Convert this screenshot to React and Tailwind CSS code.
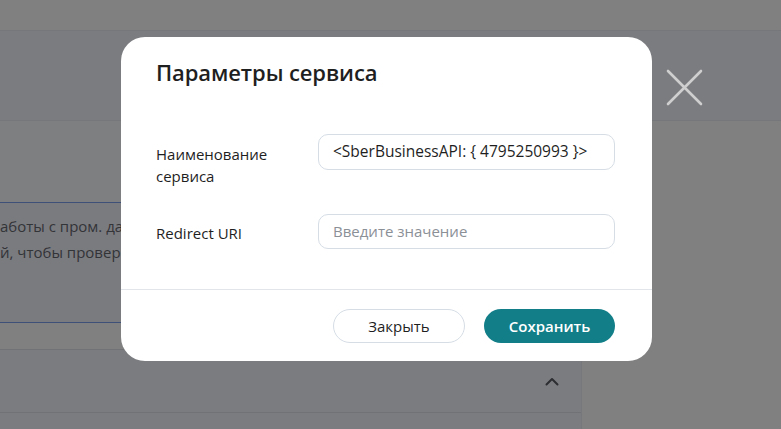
import React from "react";

export default function App() {
  const font = { fontFamily: '"Open Sans", "Noto Sans", sans-serif' };
  return (
    <div className="relative w-[781px] h-[429px] overflow-hidden bg-[#808080]" style={font}>
      {/* background page (under overlay) */}
      <div className="flex flex-col h-full">
        <div className="h-[31px] bg-[#808080] border-b border-[#76777a] shrink-0" />
        <div className="h-[90px] bg-[#7b7c80] border-b border-[#76777a] shrink-0" />
        <div className="flex flex-1">
          <div className="w-[582px] flex flex-col border-r border-[#77787b] bg-[#7e7f81]">
            <div className="h-[81px] shrink-0" />
            <div className="h-[121px] shrink-0 bg-[#7a7b7f] border-y border-[#3e5078] pt-[10px]">
              <div className="text-[15px] leading-[26px] text-[#333438] whitespace-nowrap">
                <p>аботы с пром. да</p>
                <p>й, чтобы провер</p>
              </div>
            </div>
            <div className="h-[27px] shrink-0 bg-[#808080] border-b border-[#717276]" />
            <div className="h-[63px] shrink-0 bg-[#7b7c80] border-b border-[#717276] flex items-center justify-end pr-[22px]">
              <svg width="14" height="9" viewBox="0 0 14 9">
                <path d="M1.5 7.5 L7 2 L12.5 7.5" fill="none" stroke="#2d2e31" strokeWidth="2" strokeLinecap="round" strokeLinejoin="round" />
              </svg>
            </div>
            <div className="flex-1 bg-[#7b7c80]" />
          </div>
          <div className="flex-1 bg-[#808080]" />
        </div>
      </div>

      {/* close icon over overlay */}
      <svg className="absolute left-[664px] top-[67px]" width="41" height="41" viewBox="0 0 41 41">
        <path d="M4 4 L37 37 M37 4 L4 37" stroke="#cfcfcf" strokeWidth="2.6" strokeLinecap="round" />
      </svg>

      {/* modal */}
      <div className="absolute left-[121px] top-[37px] w-[531px] h-[324px] bg-white rounded-[24px] flex flex-col">
        <div className="pl-[35px] pt-[21px] h-[97px] shrink-0">
          <h2 className="text-[22px] leading-[28px] font-semibold text-[#1f1f1f] tracking-[-0.1px]">Параметры сервиса</h2>
        </div>
        <div className="flex flex-col gap-[44px] pl-[35px] pr-[37px]">
          <div className="flex items-start h-[36px]">
            <div className="w-[162px] pt-[9px] text-[15px] leading-[22px] text-[#1f1f1f]">Наименование<br />сервиса</div>
            <div className="flex-1 h-[36px] border border-[#d6dde5] rounded-[10px] flex items-center px-[14px] text-[15.5px] text-[#1f1f1f] whitespace-nowrap">
              {"<SberBusinessAPI: { 4795250993 }>"}
            </div>
          </div>
          <div className="flex items-start h-[35px]">
            <div className="w-[162px] pt-[8px] text-[15px] leading-[22px] text-[#1f1f1f]">Redirect URI</div>
            <div className="flex-1 h-[35px] border border-[#d6dde5] rounded-[10px] flex items-center px-[14px] text-[15px] text-[#8b9097]">
              Введите значение
            </div>
          </div>
        </div>
        <div className="mt-[40px] border-t border-[#e2e6eb]" />
        <div className="flex justify-end gap-[19px] pr-[37px] pt-[19px]">
          <button className="w-[132px] h-[34px] rounded-full border border-[#d6dde5] bg-white text-[15px] text-[#1f1f1f]">Закрыть</button>
          <button className="w-[131px] h-[34px] rounded-full bg-[#127e88] text-[15px] font-semibold text-white">Сохранить</button>
        </div>
      </div>
    </div>
  );
}
